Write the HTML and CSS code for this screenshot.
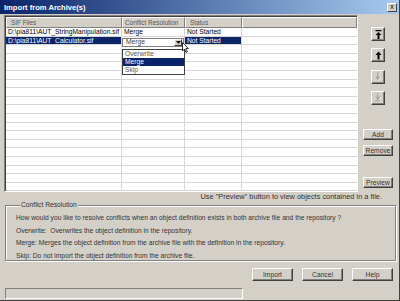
FILE: index.html
```html
<!DOCTYPE html>
<html lang="en">
<head>
    <meta charset="UTF-8">
    <title>Import from Archive(s)</title>
    <link rel="stylesheet" href="styles.css">
</head>
<body>
<div class="window">
    <div class="titlebar">
        <span class="title">Import from Archive(s)</span>
        <span class="close">x</span>
    </div>

    <div class="main">
        <div class="grid">
            <div class="row head">
                <div class="cell c1">SIF Files</div>
                <div class="cell c2">Conflict Resolution</div>
                <div class="cell c3">Status</div>
                <div class="cell c4"></div>
            </div>
            <div class="row">
                <div class="cell c1">D:\pia811\AUT_StringManipulation.sif</div>
                <div class="cell c2">Merge</div>
                <div class="cell c3">Not Started</div>
                <div class="cell c4"></div>
            </div>
            <div class="row selected">
                <div class="cell c1">D:\pia811\AUT_Calculator.sif</div>
                <div class="cell c2">
                    <div class="combo">
                        <span>Merge</span>
                        <span class="combo-btn">
                            <svg width="5" height="3" viewBox="0 0 5 3"><path d="M0 0h5L2.5 3z" fill="#000"/></svg>
                        </span>
                    </div>
                </div>
                <div class="cell c3">Not Started</div>
                <div class="cell c4"></div>
            </div>
            <div class="row"><div class="cell c1"></div><div class="cell c2"></div><div class="cell c3"></div><div class="cell c4"></div></div>
            <div class="row"><div class="cell c1"></div><div class="cell c2"></div><div class="cell c3"></div><div class="cell c4"></div></div>
            <div class="row"><div class="cell c1"></div><div class="cell c2"></div><div class="cell c3"></div><div class="cell c4"></div></div>
            <div class="row"><div class="cell c1"></div><div class="cell c2"></div><div class="cell c3"></div><div class="cell c4"></div></div>
            <div class="row"><div class="cell c1"></div><div class="cell c2"></div><div class="cell c3"></div><div class="cell c4"></div></div>
            <div class="row"><div class="cell c1"></div><div class="cell c2"></div><div class="cell c3"></div><div class="cell c4"></div></div>
            <div class="row"><div class="cell c1"></div><div class="cell c2"></div><div class="cell c3"></div><div class="cell c4"></div></div>
            <div class="row"><div class="cell c1"></div><div class="cell c2"></div><div class="cell c3"></div><div class="cell c4"></div></div>
            <div class="row"><div class="cell c1"></div><div class="cell c2"></div><div class="cell c3"></div><div class="cell c4"></div></div>
            <div class="row"><div class="cell c1"></div><div class="cell c2"></div><div class="cell c3"></div><div class="cell c4"></div></div>
            <div class="row"><div class="cell c1"></div><div class="cell c2"></div><div class="cell c3"></div><div class="cell c4"></div></div>
            <div class="row"><div class="cell c1"></div><div class="cell c2"></div><div class="cell c3"></div><div class="cell c4"></div></div>
            <div class="row"><div class="cell c1"></div><div class="cell c2"></div><div class="cell c3"></div><div class="cell c4"></div></div>
            <div class="row"><div class="cell c1"></div><div class="cell c2"></div><div class="cell c3"></div><div class="cell c4"></div></div>
            <div class="row"><div class="cell c1"></div><div class="cell c2"></div><div class="cell c3"></div><div class="cell c4"></div></div>
            <div class="row"><div class="cell c1"></div><div class="cell c2"></div><div class="cell c3"></div><div class="cell c4"></div></div>
            <div class="row"><div class="cell c1"></div><div class="cell c2"></div><div class="cell c3"></div><div class="cell c4"></div></div>

            <ul class="dropdown">
                <li>Overwrite</li>
                <li class="active">Merge</li>
                <li>Skip</li>
            </ul>
            <svg class="cursor" width="7" height="11" viewBox="0 0 7 11">
                <path d="M0.5 0.5v8.5l2-2 1.5 3.5 1.3-.6-1.5-3.3h2.7z" fill="#fff" stroke="#000" stroke-width="0.8"/>
            </svg>
        </div>

        <div class="side">
            <button class="arrow-btn first">
                <svg width="9" height="9" viewBox="0 0 9 9"><path d="M1.5 0h6v1.3h-6zM4.5 2L1.5 5h2v4h2V5h2z" fill="#000"/></svg>
            </button>
            <button class="arrow-btn">
                <svg width="9" height="9" viewBox="0 0 9 9"><path d="M4.5 0.5L1.5 4h2v4.5h2V4h2z" fill="#000"/></svg>
            </button>
            <button class="arrow-btn disabled">
                <svg width="9" height="9" viewBox="0 0 9 9"><path d="M4 0.5v5.5M2 4.5l2 3 2-3" fill="none" stroke="#fff" stroke-width="1" transform="translate(0.7 0.7)"/><path d="M4 0.5v5.5M2 4.5l2 3 2-3" fill="none" stroke="#8a8a8a" stroke-width="1"/></svg>
            </button>
            <button class="arrow-btn disabled">
                <svg width="9" height="9" viewBox="0 0 9 9"><path d="M4 0.5v4.5M2 3.5l2 3 2-3M1.5 8h5" fill="none" stroke="#fff" stroke-width="1" transform="translate(0.7 0.5)"/><path d="M4 0.5v4.5M2 3.5l2 3 2-3M1.5 8h5" fill="none" stroke="#8a8a8a" stroke-width="1"/></svg>
            </button>
            <button class="btn add">Add</button>
            <button class="btn remove">Remove</button>
            <button class="btn preview">Preview</button>
        </div>
    </div>

    <p class="hint">Use "Preview" button to view objects contained in a file.</p>

    <fieldset class="conflict">
        <legend>Conflict Resolution</legend>
        <p>How would you like to resolve conflicts when an object definition exists in both archive file and the repository ?</p>
        <p>Overwrite:&nbsp; Overwrites the object definition in the repository.</p>
        <p>Merge: Merges the object definition from the archive file with the definition in the repository.</p>
        <p>Skip: Do not import the object definition from the archive file.</p>
    </fieldset>

    <div class="footer">
        <div class="statusfield"></div>
        <div class="actions">
            <button class="btn">Import</button>
            <button class="btn">Cancel</button>
            <button class="btn">Help</button>
        </div>
    </div>
</div>
</body>
</html>
```

FILE: styles.css
```css
* {
    box-sizing: border-box;
}
body {
    margin: 0;
    font-family: "Liberation Sans", Arial, sans-serif;
    font-size: 6.7px;
    color: #000;
    background-color: #d4d0c8;
}
.window {
    width: 400px;
    height: 301px;
    background-color: #d4d0c8;
    border-right: 1px solid #404040;
    border-bottom: 1px solid #404040;
    display: flex;
    flex-direction: column;
}
.titlebar {
    height: 14px;
    flex-shrink: 0;
    background: linear-gradient(to right, #0a246a, #a6caf0);
    display: flex;
    align-items: center;
    justify-content: space-between;
    padding: 0 2px 0 4px;
}
.title {
    color: #fff;
    font-weight: bold;
    font-size: 7.6px;
}
.close {
    width: 10px;
    height: 9px;
    background-color: #d4d0c8;
    border: 1px solid;
    border-color: #fff #404040 #404040 #fff;
    font-size: 7px;
    line-height: 6px;
    text-align: center;
}
.main {
    display: flex;
    padding: 1px 0 0 4px;
    flex-shrink: 0;
}
.grid {
    position: relative;
    width: 354px;
    height: 177px;
    background-color: #fff;
    border: 1px solid;
    border-color: #808080 #fff #fff #808080;
    box-shadow: inset 1px 1px 0 #404040;
    padding: 1px 0 0 1px;
    overflow: hidden;
}
.row {
    display: flex;
    height: 8.6px;
    border-bottom: 1px solid #d6d6d6;
    line-height: 7.6px;
}
.row.head {
    height: 11px;
    line-height: 9px;
    font-size: 6.4px;
    border-bottom: none;
    background-color: #d4d0c8;
}
.cell {
    border-right: 1px solid #d6d6d6;
    padding-left: 2px;
    white-space: nowrap;
    overflow: hidden;
}
.head .cell {
    border: 1px solid;
    border-color: #fff #808080 #808080 #fff;
    color: #555;
    padding-left: 4px;
}
.head .c2 {
    padding-left: 2px;
}
.c1 { width: 116px; }
.c2 { width: 63px; }
.c3 { width: 57px; }
.c4 { flex: 1; border-right: none; }
.selected .c1,
.selected .c3 {
    background-color: #0a246a;
    color: #fff;
}
.selected .c2 {
    padding: 0;
    overflow: visible;
}
.combo {
    display: flex;
    justify-content: space-between;
    align-items: center;
    height: 9px;
    margin-top: 1px;
    background-color: #fff;
    border: 1px solid #808080;
    padding-left: 3px;
    color: #444;
}
.combo-btn {
    display: flex;
    align-items: center;
    justify-content: center;
    width: 8px;
    height: 7px;
    margin-right: 1px;
    background-color: #d4d0c8;
    border: 1px solid;
    border-color: #fff #404040 #404040 #fff;
}
.dropdown {
    position: absolute;
    left: 117px;
    top: 33px;
    width: 63px;
    margin: 0;
    padding: 0;
    list-style: none;
    background-color: #fff;
    border: 1px solid #404040;
}
.dropdown li {
    height: 8px;
    line-height: 8px;
    padding-left: 2px;
    color: #555;
}
.dropdown li.active {
    background-color: #0a246a;
    color: #fff;
}
.cursor {
    position: absolute;
    left: 177px;
    top: 26px;
}
.side {
    width: 40px;
    display: flex;
    flex-direction: column;
    align-items: center;
    padding-top: 12px;
}
button {
    font-family: inherit;
    font-size: inherit;
    color: #000;
    background-color: #d4d0c8;
    border: 1px solid;
    border-color: #fff #404040 #404040 #fff;
    box-shadow: inset -1px -1px 0 #808080;
    padding: 0;
}
.arrow-btn {
    width: 14px;
    height: 14px;
    display: flex;
    align-items: center;
    justify-content: center;
    margin-top: 7.3px;
}
.arrow-btn.first {
    margin-top: 0;
}
.btn {
    width: 30px;
    height: 11px;
    line-height: 9px;
    color: #333;
}
.add { margin-top: 24px; }
.remove { margin-top: 5px; }
.preview { margin-top: 21px; }
.hint {
    margin: 0;
    height: 9px;
    line-height: 9px;
    font-size: 7.4px;
    text-align: right;
    padding-right: 17px;
    color: #333;
}
.conflict {
    margin: 0 3px 0 5px;
    height: 60px;
    padding: 3px 6px 0 10px;
    border: 1px solid #808080;
    box-shadow: inset 1px 1px 0 #fff, 1px 1px 0 #fff;
}
.conflict legend {
    padding: 0 1px;
    margin-left: 4px;
    line-height: 8px;
    background-color: #d4d0c8;
    color: #333;
}
.conflict p {
    margin: 0;
    line-height: 12.7px;
    color: #333;
}
.footer {
    flex: 1;
    display: flex;
    justify-content: space-between;
    padding: 7px 6px 1px 5px;
}
.statusfield {
    align-self: flex-end;
    width: 238px;
    height: 11px;
    border: 1px solid;
    border-color: #808080 #fff #fff #808080;
}
.actions {
    display: flex;
    gap: 9px;
    align-self: flex-start;
}
.actions .btn {
    width: 41px;
    height: 13px;
    line-height: 11px;
}
```
